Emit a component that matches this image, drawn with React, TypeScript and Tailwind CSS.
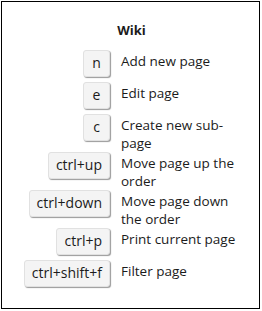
const shortcuts: { keys: string; label: string }[] = [
  { keys: 'n', label: 'Add new page' },
  { keys: 'e', label: 'Edit page' },
  { keys: 'c', label: 'Create new sub-page' },
  { keys: 'ctrl+up', label: 'Move page up the order' },
  { keys: 'ctrl+down', label: 'Move page down the order' },
  { keys: 'ctrl+p', label: 'Print current page' },
  { keys: 'ctrl+shift+f', label: 'Filter page' },
]

function KeyCap({ children }: { children: string }) {
  return (
    <span className="inline-block min-w-[27px] whitespace-nowrap rounded-[3px] border border-[#e1e1e1] bg-[#f4f4f4] px-[7px] pt-[3px] pb-[5px] text-center text-[14px] leading-[17px] text-[#1b1b1b] shadow-[1px_1px_1px_#9a9a9a]">
      {children}
    </span>
  )
}

export default function App() {
  return (
    <div className="ml-px mt-px h-[308px] w-[259px] border border-black bg-white font-['Open_Sans',sans-serif] text-[#1b1b1b]">
      <h2 className="mt-[18px] mb-[10px] pl-[2px] text-center text-[13px] leading-[20px] font-bold">Wiki</h2>
      <div className="flex flex-col pl-[18px]">
        {shortcuts.map((item) => (
          <div key={item.keys} className="flex items-start">
            <div className="mb-[5px] flex w-[90px] shrink-0 justify-end">
              <KeyCap>{item.keys}</KeyCap>
            </div>
            <p className="ml-[11px] w-[122px] pt-[3px] text-[13.5px] leading-[17.5px]">{item.label}</p>
          </div>
        ))}
      </div>
    </div>
  )
}
